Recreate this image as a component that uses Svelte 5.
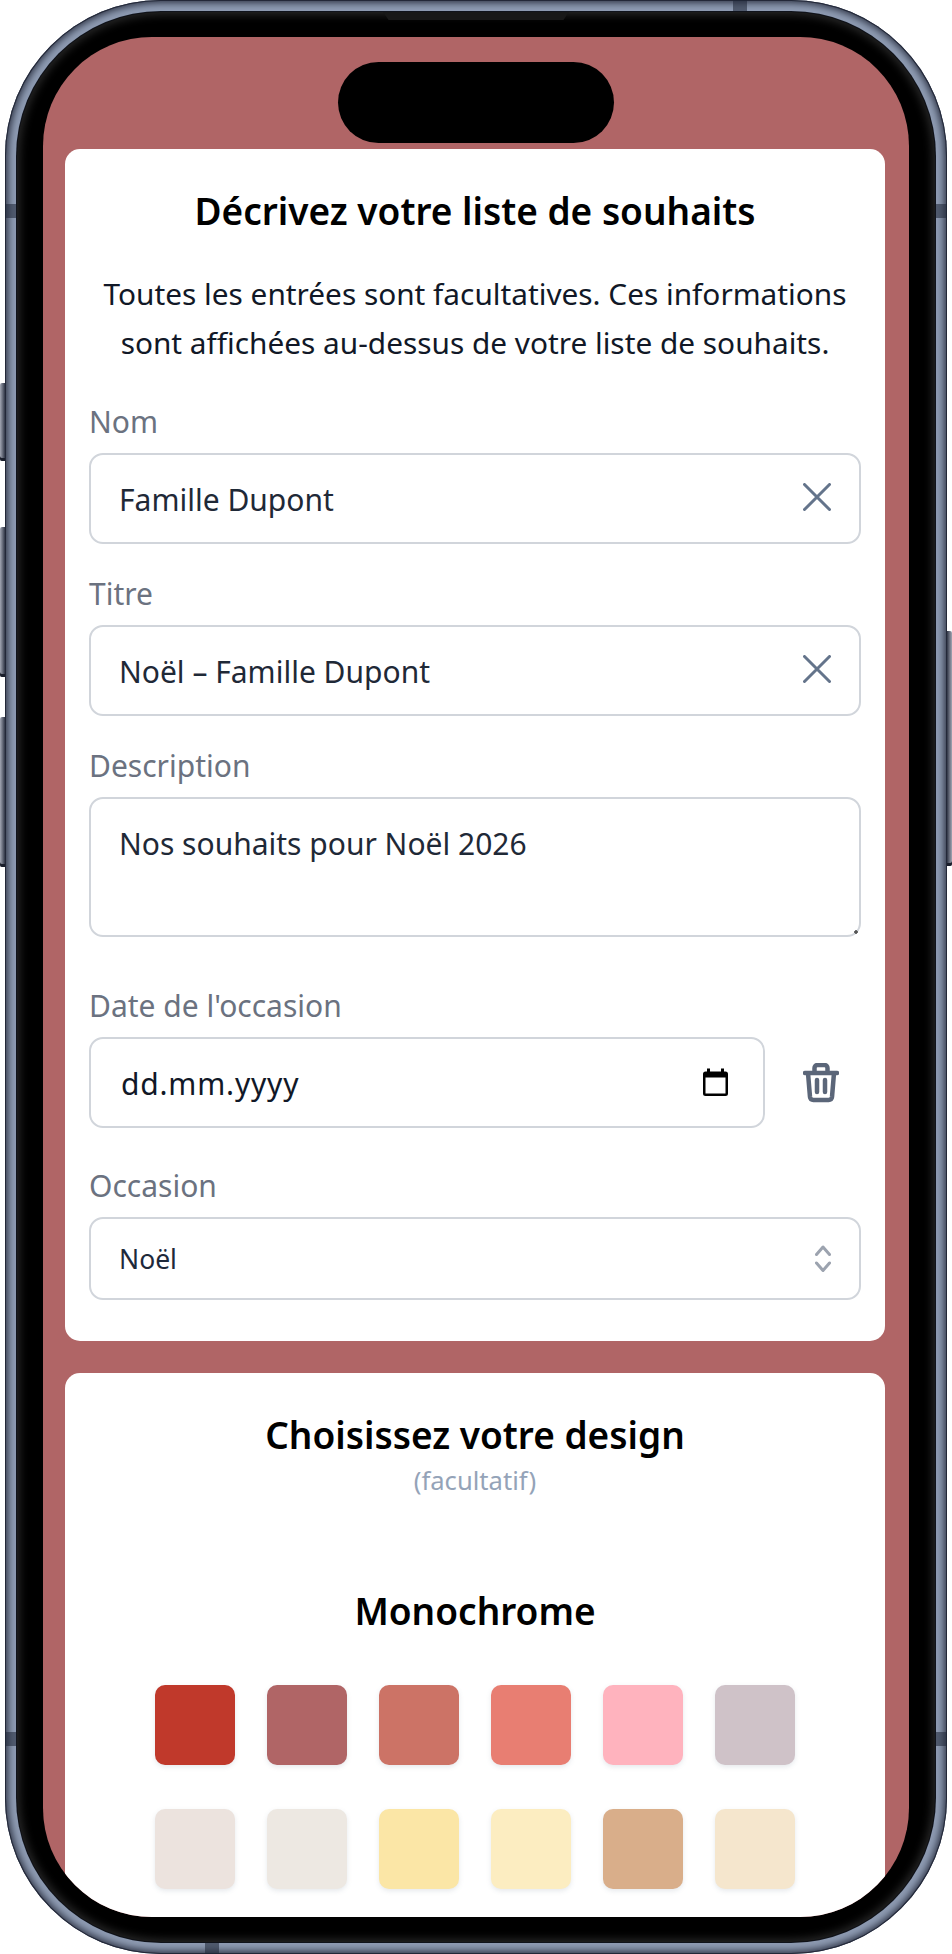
<script>
  const row1 = ["#c0392b", "#b06566", "#cc7366", "#e87e72", "#ffb3be", "#cfc2c8"];
  const row2 = ["#ece3de", "#ede8e2", "#fbe6a6", "#fcedc1", "#d9ae8a", "#f5e6cd"];
  const swatches = [...row1, ...row2];
</script>

<div class="phone">
  <!-- side buttons -->
  <span class="btn btn-a"></span>
  <span class="btn btn-b"></span>
  <span class="btn btn-c"></span>
  <span class="btn btn-d"></span>

  <div class="frame">
    <!-- antenna bands -->
    <span class="band band-top"></span>
    <span class="band band-bottom"></span>
    <span class="band band-left1"></span>
    <span class="band band-left2"></span>
    <span class="band band-right1"></span>
    <span class="band band-right2"></span>

    <div class="bezel">
      <span class="speaker"></span>
      <div class="screen">
        <div class="island"></div>

        <section class="card card-form">
          <h2>Décrivez votre liste de souhaits</h2>
          <p class="intro">Toutes les entrées sont facultatives. Ces informations sont affichées au-dessus de votre liste de souhaits.</p>

          <div class="field">
            <label for="nom">Nom</label>
            <div class="box">
              <input id="nom" type="text" value="Famille Dupont" />
              <button class="clear" aria-label="Effacer">
                <svg viewBox="0 0 28 28" width="28" height="28"><path d="M1.5 1.5l25 25M26.5 1.5l-25 25" /></svg>
              </button>
            </div>
          </div>

          <div class="field">
            <label for="titre">Titre</label>
            <div class="box">
              <input id="titre" type="text" value="Noël – Famille Dupont" />
              <button class="clear" aria-label="Effacer">
                <svg viewBox="0 0 28 28" width="28" height="28"><path d="M1.5 1.5l25 25M26.5 1.5l-25 25" /></svg>
              </button>
            </div>
          </div>

          <div class="field field-area">
            <label for="desc">Description</label>
            <textarea id="desc">Nos souhaits pour Noël 2026</textarea>
          </div>

          <div class="field field-date">
            <label for="date">Date de l'occasion</label>
            <div class="date-row">
              <div class="box date-box">
                <input id="date" type="text" value="dd.mm.yyyy" />
                <svg class="cal" viewBox="0 0 25 28" width="25" height="28">
                  <path d="M4 0.5h3v3h11v-3h3v3h1.5a2.5 2.5 0 0 1 2.5 2.5v19.500a2.500 2.500 0 0 1-2.500 2.500h-20a2.500 2.500 0 0 1-2.500-2.500v-19.500a2.500 2.500 0 0 1 2.500-2.500h1.500zM2.500 9.500v16h20v-16z" />
                </svg>
              </div>
              <button class="trash" aria-label="Supprimer">
                <svg viewBox="0 0 36 40" width="36" height="40">
                  <path d="M2 10h32M5 10l2 24a3.500 3.500 0 0 0 3.500 3h15a3.500 3.500 0 0 0 3.500-3l2-24M11.500 9v-4a3 3 0 0 1 3-3h7a3 3 0 0 1 3 3v4M14 17v12M22 17v12" />
                </svg>
              </button>
            </div>
          </div>

          <div class="field field-last">
            <label for="occ">Occasion</label>
            <div class="box select-box">
              <select id="occ"><option>Noël</option></select>
              <svg class="updown" viewBox="0 0 16 27" width="16" height="27">
                <path d="M1.500 9.500l6.500-7.500l6.500 7.500M1.500 18l6.500 7.500l6.500-7.500" />
              </svg>
            </div>
          </div>
        </section>

        <section class="card card-design">
          <h2>Choisissez votre design</h2>
          <div class="sub">(facultatif)</div>
          <h2 class="group">Monochrome</h2>
          <div class="swatches">
            {#each swatches as color}
              <div class="swatch" style="background: {color}"></div>
            {/each}
          </div>
        </section>
      </div>
    </div>
  </div>
</div>

<style>
  :global(body) {
    margin: 0;
    background: #fff;
    font-family: "Noto Sans", "Open Sans", sans-serif;
  }

  .phone {
    position: relative;
    width: 952px;
    height: 1954px;
    overflow: hidden;
  }

  /* metal rim: dark outside, light towards the bezel */
  .frame {
    position: relative;
    box-sizing: border-box;
    width: 942px;
    height: 1954px;
    margin-left: 5px;
    padding: 12px;
    border-radius: 156px;
    background: #8e9bb2;
    box-shadow:
      inset 0 0 0 1px #232838,
      inset 0 0 7px 3px #2f3546;
  }

  .bezel {
    position: relative;
    box-sizing: border-box;
    height: 1930px;
    padding: 25px 26px;
    border-radius: 144px;
    background: #000;
    box-shadow:
      0 0 0 1px #10131b,
      inset 0 0 9px 3px #262626;
  }

  .screen {
    position: relative;
    box-sizing: border-box;
    height: 1880px;
    padding: 112px 23px 0 22px;
    border-radius: 109px;
    overflow: hidden;
    background: #b06566;
  }

  .island {
    position: absolute;
    top: 25px;
    left: 295px;
    width: 276px;
    height: 81px;
    border-radius: 41px;
    background: #000;
  }

  .speaker {
    position: absolute;
    top: 0;
    left: 366px;
    width: 186px;
    height: 8px;
    clip-path: polygon(0 0, 100% 0, 97% 100%, 3% 100%);
    background: #181818;
  }

  .band {
    position: absolute;
    background: rgba(30, 36, 52, 0.55);
  }
  .band-top { top: 0; left: 728px; width: 14px; height: 12px; }
  .band-bottom { bottom: 0; left: 200px; width: 14px; height: 12px; }
  .band-left1 { top: 204px; left: 0; width: 12px; height: 14px; }
  .band-left2 { top: 1732px; left: 0; width: 12px; height: 14px; }
  .band-right1 { top: 204px; right: 0; width: 12px; height: 14px; }
  .band-right2 { top: 1732px; right: 0; width: 12px; height: 14px; }

  .btn {
    position: absolute;
    width: 5px;
    border-radius: 2px 0 0 2px;
    background: linear-gradient(90deg, #a3a7b4, #2f3545);
    box-shadow: inset 0 -3px 0 #1a1e2b;
  }
  .btn-a { left: 0; top: 383px; height: 78px; }
  .btn-b { left: 0; top: 527px; height: 150px; }
  .btn-c { left: 0; top: 717px; height: 150px; }
  .btn-d {
    right: 0;
    top: 631px;
    height: 235px;
    border-radius: 0 2px 2px 0;
    background: linear-gradient(270deg, #a3a7b4, #2f3545);
  }

  .card {
    box-sizing: border-box;
    width: 820px;
    border-radius: 15px;
    background: #fff;
    text-align: center;
  }

  .card-form {
    padding: 38px 24px 41px;
    text-align: left;
  }

  .card-design {
    margin-top: 32px;
    padding: 38px 24px 60px;
  }

  h2 {
    margin: 0;
    font-size: 37px;
    line-height: 48px;
    font-weight: 600;
    color: #000;
    text-align: center;
  }

  .intro {
    margin: 35px 0;
    font-size: 29.8px;
    line-height: 48.5px;
    color: #111827;
    text-align: center;
  }

  .field {
    padding-bottom: 30px;
  }
  .field-area { padding-bottom: 49px; }
  .field-date { padding-bottom: 38px; }
  .field-last { padding-bottom: 0; }

  label {
    display: block;
    height: 40px;
    margin-bottom: 11px;
    font-size: 30px;
    line-height: 40px;
    color: #6b7280;
  }

  .box {
    display: flex;
    align-items: center;
    box-sizing: border-box;
    height: 91px;
    padding: 0 22px 0 28px;
    border: 2px solid #d1d5db;
    border-radius: 14px;
    background: #fff;
  }

  input,
  textarea,
  select {
    font-family: inherit;
    font-size: 30px;
    color: #1f2937;
    background: transparent;
    border: 0;
    outline: 0;
  }

  input {
    flex: 1;
    min-width: 0;
    padding: 1px 0 0;
  }

  .clear,
  .trash {
    display: flex;
    padding: 0;
    border: 0;
    background: none;
  }

  .clear svg path,
  .trash svg path {
    fill: none;
    stroke: #64748b;
    stroke-linecap: round;
    stroke-linejoin: round;
  }
  .clear svg path { stroke-width: 3px; }
  .clear { margin-top: -4px; margin-right: 6px; }
  .trash svg path { stroke: #5b6679; stroke-width: 4.5px; }

  textarea {
    display: block;
    box-sizing: border-box;
    width: 100%;
    height: 140px;
    padding: 22px 28px;
    border: 2px solid #d1d5db;
    border-radius: 14px;
    line-height: 45px;
    resize: vertical;
  }

  /* tiny grip in the corner, as in the reference */
  textarea::-webkit-resizer {
    background: radial-gradient(circle at 80% 80%, #555 1.5px, transparent 2px);
  }

  .date-row {
    display: flex;
    align-items: center;
    gap: 38px;
  }

  .date-box {
    width: 676px;
    padding-left: 30px;
    padding-right: 24px;
  }

  .date-box input {
    color: #111827;
    letter-spacing: 0.8px;
  }

  .cal {
    margin-top: -2px;
    margin-right: 11px;
    fill: #000;
    fill-rule: evenodd;
  }

  .trash {
    margin-top: 1px;
  }

  .select-box {
    height: 83px;
    padding-right: 28px;
  }

  select {
    flex: 1;
    appearance: none;
    padding: 1px 0 0;
    font-size: 26.5px;
    color: #1e293b;
  }

  .updown {
    fill: none;
    stroke: #9ca3af;
    stroke-width: 3px;
    stroke-linecap: round;
    stroke-linejoin: round;
  }

  .sub {
    margin-top: 4px;
    font-size: 25.6px;
    line-height: 36px;
    color: #94a3b8;
  }

  .group {
    margin-top: 88px;
  }

  .swatches {
    display: grid;
    grid-template-columns: repeat(6, 80px);
    justify-content: center;
    gap: 44px 32px;
    margin-top: 50px;
  }

  .swatch {
    height: 80px;
    border-radius: 10px;
    box-shadow: 0 2px 5px rgba(100, 116, 139, 0.16);
  }
</style>
